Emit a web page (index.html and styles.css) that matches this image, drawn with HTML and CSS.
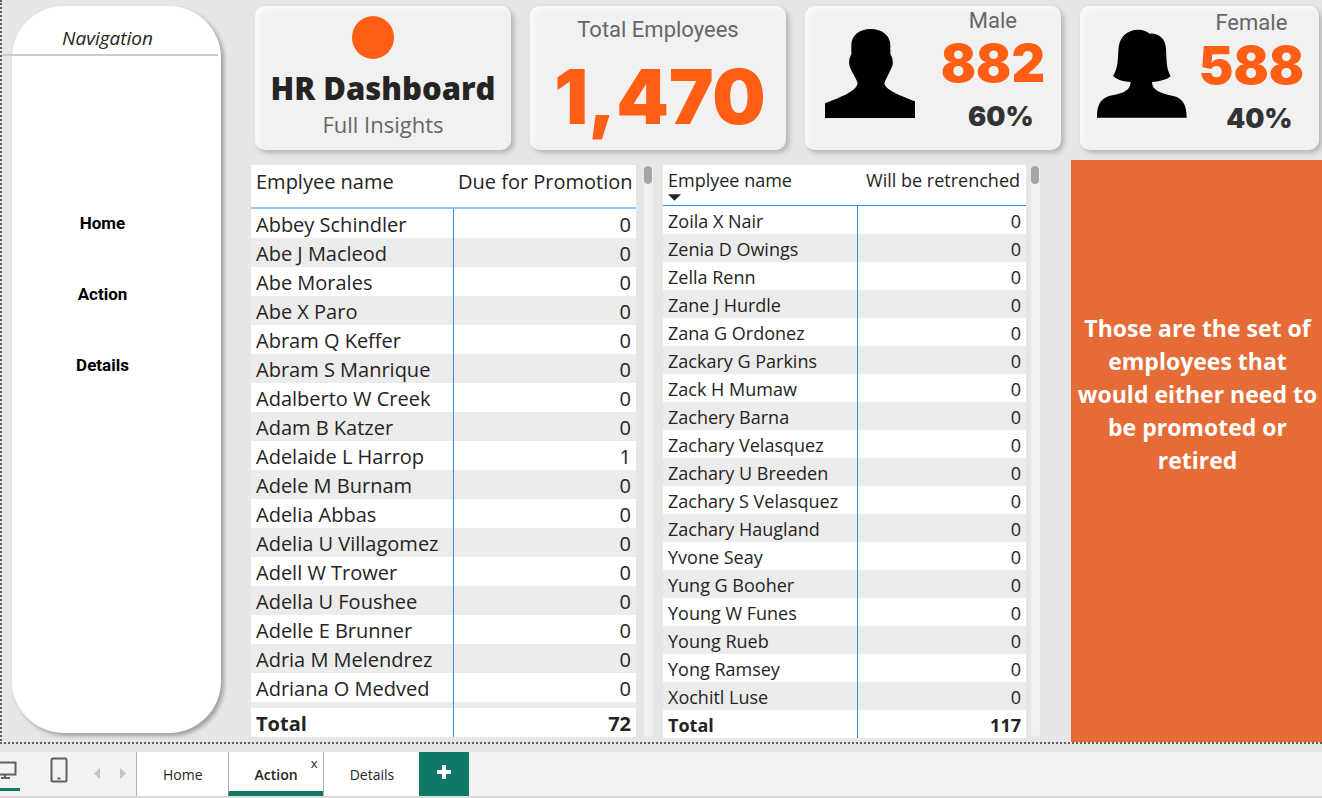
FILE: index.html
```html
<!DOCTYPE html>
<html lang="en">
<head>
<meta charset="utf-8">
<title>HR Dashboard</title>
<link rel="stylesheet" href="styles.css">
</head>
<body>
<div class="canvas">
  <aside class="sidebar">
    <h2 class="sidebar-title">Navigation</h2>
    <hr class="sidebar-rule">
    <nav class="sidebar-nav">
      <a href="#home">Home</a>
      <a href="#action">Action</a>
      <a href="#details">Details</a>
    </nav>
  </aside>

  <main class="main">
    <section class="cards">
      <div class="card card-brand">
        <span class="brand-dot"></span>
        <h1 class="brand-title">HR Dashboard</h1>
        <p class="brand-sub">Full Insights</p>
      </div>
      <div class="card card-total">
        <p class="card-label">Total Employees</p>
        <p class="total-value">1,470</p>
      </div>
      <div class="card card-person">
        <svg class="person" viewBox="77 86 270 267" aria-hidden="true"><path d="M77 309C110 296 172 275 175 249C174 240 160 220 154 205C148 195 147 176 156 162V135C156 105 180 86 214 86C248 86 273 105 273 135V162C283 176 282 195 275 205C268 222 257 240 255 250C262 272 310 288 347 303V353H77Z"/></svg>
        <div class="person-stats">
          <p class="card-label">Male</p>
          <p class="person-value">882</p>
          <p class="person-share">60%</p>
        </div>
      </div>
      <div class="card card-person card-female">
        <svg class="person" viewBox="81 86 270 265" aria-hidden="true"><path d="M81 351C81 318 88 297 115 287C140 279 180 280 182 244C160 242 145 240 129 226C142 205 143 190 145 150C146 110 170 87 205 87C220 87 232 93 239 99C265 97 287 113 288 145C290 190 290 205 302 227C290 238 265 243 246 244C246 268 270 278 310 286C340 293 350 315 350 351Z"/></svg>
        <div class="person-stats">
          <p class="card-label">Female</p>
          <p class="person-value">588</p>
          <p class="person-share">40%</p>
        </div>
      </div>
    </section>

    <section class="panels">
      <table class="grid grid-promotion">
        <thead><tr><th scope="col">Emplyee name</th><th scope="col">Due for Promotion</th></tr></thead>
        <tbody>
          <tr><td>Abbey Schindler</td><td>0</td></tr>
          <tr><td>Abe J Macleod</td><td>0</td></tr>
          <tr><td>Abe Morales</td><td>0</td></tr>
          <tr><td>Abe X Paro</td><td>0</td></tr>
          <tr><td>Abram Q Keffer</td><td>0</td></tr>
          <tr><td>Abram S Manrique</td><td>0</td></tr>
          <tr><td>Adalberto W Creek</td><td>0</td></tr>
          <tr><td>Adam B Katzer</td><td>0</td></tr>
          <tr><td>Adelaide L Harrop</td><td>1</td></tr>
          <tr><td>Adele M Burnam</td><td>0</td></tr>
          <tr><td>Adelia Abbas</td><td>0</td></tr>
          <tr><td>Adelia U Villagomez</td><td>0</td></tr>
          <tr><td>Adell W Trower</td><td>0</td></tr>
          <tr><td>Adella U Foushee</td><td>0</td></tr>
          <tr><td>Adelle E Brunner</td><td>0</td></tr>
          <tr><td>Adria M Melendrez</td><td>0</td></tr>
          <tr><td>Adriana O Medved</td><td>0</td></tr>
          <tr class="row-cut"><td></td><td></td></tr>
        </tbody>
        <tfoot><tr><td>Total</td><td>72</td></tr></tfoot>
      </table>
      <div class="scroll"><span class="scroll-thumb"></span></div>

      <table class="grid grid-retrench">
        <thead><tr><th scope="col">Emplyee name<svg class="sort" viewBox="0 0 12 6" aria-hidden="true"><path d="M0 0H12L6 6Z"/></svg></th><th scope="col">Will be retrenched</th></tr></thead>
        <tbody>
          <tr><td>Zoila X Nair</td><td>0</td></tr>
          <tr><td>Zenia D Owings</td><td>0</td></tr>
          <tr><td>Zella Renn</td><td>0</td></tr>
          <tr><td>Zane J Hurdle</td><td>0</td></tr>
          <tr><td>Zana G Ordonez</td><td>0</td></tr>
          <tr><td>Zackary G Parkins</td><td>0</td></tr>
          <tr><td>Zack H Mumaw</td><td>0</td></tr>
          <tr><td>Zachery Barna</td><td>0</td></tr>
          <tr><td>Zachary Velasquez</td><td>0</td></tr>
          <tr><td>Zachary U Breeden</td><td>0</td></tr>
          <tr><td>Zachary S Velasquez</td><td>0</td></tr>
          <tr><td>Zachary Haugland</td><td>0</td></tr>
          <tr><td>Yvone Seay</td><td>0</td></tr>
          <tr><td>Yung G Booher</td><td>0</td></tr>
          <tr><td>Young W Funes</td><td>0</td></tr>
          <tr><td>Young Rueb</td><td>0</td></tr>
          <tr><td>Yong Ramsey</td><td>0</td></tr>
          <tr><td>Xochitl Luse</td><td>0</td></tr>
        </tbody>
        <tfoot><tr><td>Total</td><td>117</td></tr></tfoot>
      </table>
      <div class="scroll scroll-last"><span class="scroll-thumb"></span></div>

      <div class="note"><p>Those are the set of employees that would either need to be promoted or retired</p></div>
    </section>
  </main>
</div>

<footer class="pagebar">
  <button class="view view-desktop" aria-label="Desktop layout"><svg width="24" height="20" viewBox="0 0 24 20" aria-hidden="true"><path d="M1 2.500H22.500V14.500H1ZM12 14.500V18M8 18H17"/></svg></button>
  <button class="view view-phone" aria-label="Mobile layout"><svg width="18" height="26" viewBox="0 0 18 26" aria-hidden="true"><rect x="1.500" y="1.500" width="15" height="23" rx="1.500"/><path d="M7.500 21.500H10.500"/></svg></button>
  <button class="step" aria-label="Previous page"><svg width="6" height="11" viewBox="0 0 6 11" aria-hidden="true"><path d="M6 0V11L0 5.500Z"/></svg></button>
  <button class="step" aria-label="Next page"><svg width="6" height="11" viewBox="0 0 6 11" aria-hidden="true"><path d="M0 0V11L6 5.500Z"/></svg></button>
  <div class="tabs">
    <div class="tab"><button class="tab-name">Home</button></div>
    <div class="tab tab-active"><button class="tab-name">Action</button><button class="tab-close" aria-label="Close Action">x</button></div>
    <div class="tab"><button class="tab-name">Details</button></div>
    <button class="tab-add" aria-label="New page"><svg width="14" height="14" viewBox="0 0 14 14" aria-hidden="true"><path d="M5 0H9V5H14V9H9V14H5V9H0V5H5Z"/></svg></button>
  </div>
</footer>
</body>
</html>
```

FILE: styles.css
```css
* { box-sizing: border-box; }

body {
  margin: 0;
  min-height: 100vh;
  display: flex;
  flex-direction: column;
  background: #e6e6e6;
  color: #252423;
  font-family: "Open Sans", "Noto Sans", sans-serif;
}

h1, h2, p { margin: 0; }

button {
  padding: 0;
  border: 0;
  background: none;
  color: inherit;
  font: inherit;
}

.canvas {
  flex: 1;
  display: flex;
  gap: 30px;
  border-left: 2px dotted #605e5c;
  border-bottom: 2px dotted #605e5c;
  margin-bottom: 8px;
}

/* Navigation */
.sidebar {
  width: 209px;
  flex: none;
  margin: 6px 0 9px 10px;
  border-radius: 52px;
  background: #fff;
  box-shadow: 3px 3px 4px #a0a0a0;
}

.sidebar-title {
  padding: 17px 18px 1px 0;
  font-size: 19px;
  font-weight: 400;
  font-style: italic;
  line-height: 30px;
  text-align: center;
}

.sidebar-rule {
  height: 2px;
  margin: 0 3px 0 -10px;
  border: 0;
  background: #cbcbcb;
}

.sidebar-nav {
  display: flex;
  flex-direction: column;
  align-items: center;
  gap: 47px;
  padding: 155px 28px 0 0;
}

.sidebar-nav a {
  color: #000;
  font: 700 17px/24px Roboto, sans-serif;
  text-decoration: none;
}

/* Cards */
.main {
  flex: 1;
  min-width: 0;
  display: flex;
  flex-direction: column;
}

.cards {
  display: grid;
  grid-template-columns: 256fr 256fr 256fr 239fr;
  gap: 19px;
  padding: 6px 3px 10px 4px;
}

.card {
  height: 144px;
  border-radius: 10px;
  background: #f1f1f1;
  box-shadow: 3px 3px 5px #b4b4b4, inset 3px 3px 5px #fafafa;
}

.card-label {
  color: #666;
  font: 400 22px/26px Roboto, sans-serif;
}

.card-brand,
.card-total {
  display: flex;
  flex-direction: column;
  align-items: center;
}

.brand-dot {
  width: 42px;
  height: 43px;
  margin: 10px 20px 6px 0;
  border-radius: 50%;
  background: #ff5e14;
}

.brand-title {
  font-size: 31px;
  font-weight: 800;
  line-height: 46px;
  white-space: nowrap;
}

.brand-sub {
  color: #666;
  font-size: 22px;
  line-height: 26px;
}

.card-total { padding-top: 11px; }

.total-value {
  padding: 10px 0 0 4px;
  color: #ff5e14;
  font: 900 75px/88px Inter, sans-serif;
}

.card-person {
  display: flex;
  justify-content: space-between;
  align-items: flex-start;
  padding: 0 16px 0 20px;
}

.card-female { padding: 0 15px 0 17px; }

.person {
  width: 90px;
  height: 89px;
  margin-top: 23px;
}

.person-stats {
  padding-top: 2px;
  text-align: center;
}

.card-female .person-stats { padding-top: 4px; }

.person-value {
  color: #ff5e14;
  font: 900 52px/60px Inter, sans-serif;
}

.person-share {
  padding: 6px 0 0 16px;
  color: #333;
  font: 900 27px/34px Inter, sans-serif;
}

/* Tables */
.panels {
  flex: 1;
  display: grid;
  grid-template-columns: 385fr 17px 363fr 35px 251fr;
  column-gap: 5px;
  align-items: start;
}

.grid {
  width: 100%;
  margin-top: 5px;
  border-collapse: collapse;
  table-layout: fixed;
  background: #fff;
  white-space: nowrap;
}

.grid th {
  padding: 2px 6px 0 5px;
  border-bottom: 2px solid #8fcaff;
  font-weight: 400;
  text-align: left;
  vertical-align: top;
}

.grid td { padding: 2px 5px 0; }

.grid th + th,
.grid td + td { text-align: right; }

.grid td + td { border-left: 1px solid #3590e6; }

.grid tbody tr:nth-child(even) { background: #ececec; }

.grid tfoot { font-weight: 700; }

.grid-promotion {
  font-size: 20px;
  line-height: 27px;
}

.grid-promotion th {
  height: 43px;
  padding-top: 3px;
}

.grid-promotion th:first-child { width: 202px; }

.grid-promotion .row-cut td { height: 6px; }

.grid-retrench {
  font-size: 18px;
  line-height: 26px;
}

.grid-retrench th {
  height: 40px;
  border-bottom: 1px solid #3590e6;
}

.grid-retrench th:first-child { width: 194px; }

.sort {
  display: block;
  width: 13px;
  height: 7px;
  margin-top: 1px;
  fill: #252423;
}

.scroll {
  align-self: stretch;
  margin: 5px 5px 5px 3px;
  border-radius: 5px;
  background: #f1f1f1;
}

.scroll-last { margin: 5px 26px 5px 0; }

.scroll-thumb {
  display: block;
  height: 18px;
  margin: 1px 1px 0 0;
  border-radius: 4px;
  background: #a6a5a3;
}

.note {
  align-self: stretch;
  padding: 152px 0 0 2px;
  background: #e66c37;
  color: #fff;
  font-size: 23px;
  font-weight: 700;
  line-height: 33px;
  text-align: center;
}

/* Page bar */
.pagebar {
  display: flex;
  height: 46px;
  padding-bottom: 1px;
  background: #f3f2f0;
  box-shadow: inset 0 -2px #dcdbd9;
  font-size: 14px;
}

.view svg {
  fill: none;
  stroke: #605e5c;
  stroke-width: 2;
}

.view-desktop {
  width: 30px;
  height: 39px;
  margin-left: -10px;
  padding-top: 4px;
  border-bottom: 3px solid #117865;
}

.view-phone {
  width: 50px;
  height: 40px;
  margin-left: 14px;
}

.step {
  width: 26px;
  height: 42px;
  fill: #c4c3c1;
}

.tabs { display: flex; }

.tab {
  position: relative;
  display: flex;
  margin-bottom: 1px;
  border-left: 1px solid #b0afad;
  background: #fff;
}

.tab-name { padding: 0 25px 0 26px; }

.tab-active { border-bottom: 5px solid #117865; }

.tab-active .tab-name {
  padding-top: 5px;
  font-weight: 600;
}

.tab-close {
  position: absolute;
  top: 2px;
  right: 5px;
  font-size: 13px;
  line-height: 18px;
}

.tab-add {
  width: 50px;
  margin-bottom: 1px;
  padding-bottom: 2px;
  background: #117865;
  fill: #fff;
}
```
